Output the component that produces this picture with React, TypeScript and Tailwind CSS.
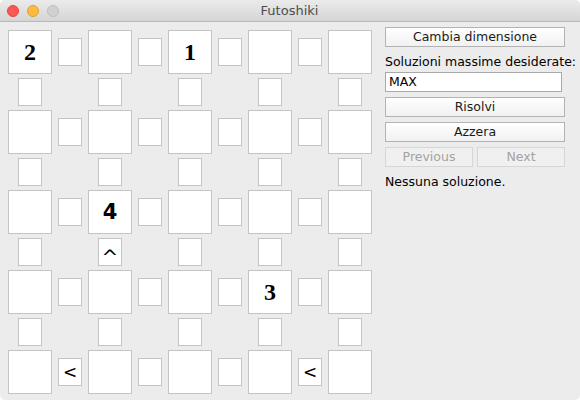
import React from "react";

const SANS = { fontFamily: '"DejaVu Sans", "Liberation Sans", sans-serif' };

type Val = { kind: "serif" | "sans"; v: string } | null;

const grid: Val[][] = [
  [{ kind: "serif", v: "2" }, null, { kind: "serif", v: "1" }, null, null],
  [null, null, null, null, null],
  [null, { kind: "sans", v: "4" }, null, null, null],
  [null, null, null, { kind: "serif", v: "3" }, null],
  [null, null, null, null, null],
];

const hCons: Record<string, string> = { "4-0": "<", "4-3": "<" };
const vCons: Record<string, string> = { "2-1": "^" };

function BigCell({ val }: { val: Val }) {
  return (
    <div className="w-[44px] h-[44px] bg-white border border-[#c4c4c4] flex items-center justify-center">
      {val && val.kind === "serif" && (
        <span
          className="text-[24px] font-bold text-black leading-none"
          style={{ fontFamily: '"Liberation Serif", serif' }}
        >
          {val.v}
        </span>
      )}
      {val && val.kind === "sans" && (
        <span
          className="text-[21px] font-bold text-black leading-none"
          style={{ fontFamily: '"DejaVu Sans", sans-serif' }}
        >
          {val.v}
        </span>
      )}
    </div>
  );
}

function SmallBox({ sym }: { sym?: string }) {
  return (
    <div className="w-[24px] h-[28px] bg-white border border-[#c4c4c4] flex items-center justify-center">
      {sym === "<" && (
        <span className="text-[17px] text-black leading-none" style={SANS}>
          &lt;
        </span>
      )}
      {sym === "^" && (
        <span className="text-[20px] text-black leading-none mt-[10px]" style={SANS}>
          ^
        </span>
      )}
    </div>
  );
}

function Btn({ children, disabled, className = "" }: { children: React.ReactNode; disabled?: boolean; className?: string }) {
  return (
    <div
      className={
        "h-[20px] flex items-center justify-center text-[12.5px] leading-none border " +
        (disabled
          ? "border-[#d6d6d6] text-[#a3a3a3] bg-[#f0f0f0] "
          : "border-[#b3b3b3] text-[#1a1a1a] bg-gradient-to-b from-[#ffffff] to-[#f1f1f1] ") +
        className
      }
      style={SANS}
    >
      {children}
    </div>
  );
}

export default function App() {
  return (
    <div className="w-[580px] h-[400px] bg-[#ececec] flex flex-col overflow-hidden rounded-[5px]">
      <div className="h-[22px] shrink-0 bg-gradient-to-b from-[#ebebeb] to-[#d5d5d5] border-b border-[#b8b8b8] flex items-center">
        <div className="flex items-center gap-[8px] pl-[7px]">
          <div className="w-[12px] h-[12px] rounded-full bg-[#fc5753] border border-[#df4744]" />
          <div className="w-[12px] h-[12px] rounded-full bg-[#fdbc40] border border-[#de9f34]" />
          <div className="w-[12px] h-[12px] rounded-full bg-[#d0d0d0] border border-[#bdbdbd]" />
        </div>
        <div className="flex-1 text-center text-[13px] text-[#4d4d4d] pr-[60px]" style={SANS}>
          Futoshiki
        </div>
      </div>
      <div className="flex flex-1">
        <div className="pl-[8px] pt-[8px] flex flex-col gap-[4px]">
          {grid.map((row, r) => (
            <React.Fragment key={r}>
              <div className="flex items-center gap-[6px]">
                {row.map((cell, c) => (
                  <React.Fragment key={c}>
                    <BigCell val={cell} />
                    {c < 4 && <SmallBox sym={hCons[`${r}-${c}`]} />}
                  </React.Fragment>
                ))}
              </div>
              {r < 4 && (
                <div className="flex gap-[56px] pl-[10px]">
                  {row.map((_, c) => (
                    <SmallBox key={c} sym={vCons[`${r}-${c}`]} />
                  ))}
                </div>
              )}
            </React.Fragment>
          ))}
        </div>
        <div className="ml-[13px] w-[180px] pt-[5px] flex flex-col">
          <Btn>Cambia dimensione</Btn>
          <div className="mt-[7px] text-[12.5px] text-black leading-[16px] whitespace-nowrap" style={SANS}>
            Soluzioni massime desiderate:
          </div>
          <div
            className="mt-[2px] w-[177px] h-[20px] bg-white border border-[#a9a9a9] flex items-center px-[3px] text-[12.5px] text-black"
            style={SANS}
          >
            MAX
          </div>
          <Btn className="mt-[5px]">Risolvi</Btn>
          <Btn className="mt-[5px]">Azzera</Btn>
          <div className="mt-[5px] flex gap-[4px]">
            <Btn disabled className="flex-1">Previous</Btn>
            <Btn disabled className="flex-1">Next</Btn>
          </div>
          <div className="mt-[7px] text-[12.5px] text-black leading-[16px]" style={SANS}>
            Nessuna soluzione.
          </div>
        </div>
      </div>
    </div>
  );
}
